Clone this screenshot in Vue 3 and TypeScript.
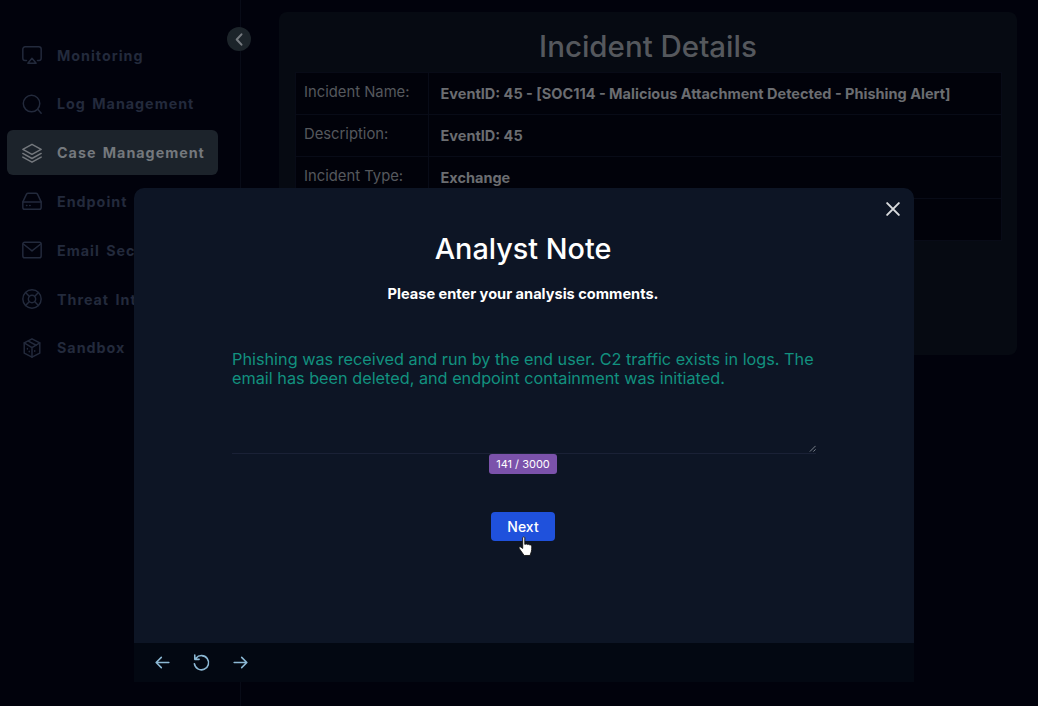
<template>
  <div class="page">
    <aside class="sidebar">
      <nav class="nav">
        <a v-for="item in navItems" :key="item.label" class="nav-item" :class="{ active: item.active }">
          <svg class="nav-icon" viewBox="0 0 24 24" fill="none" stroke="currentColor" stroke-width="1.6" stroke-linecap="round" stroke-linejoin="round">
            <path v-for="(d, i) in item.paths" :key="i" :d="d" />
          </svg>
          <span class="nav-label">{{ item.label }}</span>
        </a>
      </nav>
      <button class="collapse">
        <svg viewBox="0 0 24 24" fill="none" stroke="currentColor" stroke-width="2.6" stroke-linecap="round" stroke-linejoin="round">
          <path d="M14.5 5.5 8.5 12l6 6.5" />
        </svg>
      </button>
    </aside>

    <main class="main">
      <section class="panel">
        <h1 class="panel-title">Incident Details</h1>
        <table class="details">
          <tbody>
            <tr v-for="(row, i) in rows" :key="i">
              <td class="cell-label">{{ row.label }}</td>
              <td class="cell-value">{{ row.value }}</td>
            </tr>
          </tbody>
        </table>
      </section>
    </main>

    <div class="modal">
      <div class="modal-body">
        <button class="close">
          <svg viewBox="0 0 24 24" fill="none" stroke="currentColor" stroke-width="2.4" stroke-linecap="round">
            <path d="M5 5l14 14M19 5 5 19" />
          </svg>
        </button>
        <h2 class="modal-title">Analyst Note</h2>
        <p class="modal-sub">Please enter your analysis comments.</p>
        <div class="note">
          <p class="note-text">{{ note }}</p>
          <svg class="grip" viewBox="0 0 8 8" stroke="#8a929c" stroke-width="1">
            <path d="M1 7.5 7.5 1M5 7.5 7.5 5" />
          </svg>
        </div>
        <span class="counter">{{ note.length }} / 3000</span>
        <button class="next">
          Next
          <svg class="hand" viewBox="0 0 16 20">
            <path d="M5 1.6c0-1.1 1.900-1.100 1.900 0v6l.5-.1c.9-.4 1.700-.3 2 .3.8-.4 1.600-.2 1.900.4.9-.3 1.800.1 1.900 1 .1 2.100 0 4.300-.7 6.100l-.8 2.400H6.300L2 11.600c-.8-1-.2-2.100 1-1.700l2 1.400z" fill="#fff" stroke="#111" stroke-width=".8" stroke-linejoin="round" />
          </svg>
        </button>
      </div>
      <footer class="modal-foot">
        <svg class="foot-icon" viewBox="0 0 24 24" fill="none" stroke="currentColor" stroke-width="2" stroke-linecap="round" stroke-linejoin="round">
          <path d="M20 12H4.5M10.5 5.500 4 12l6.500 6.500" />
        </svg>
        <svg class="foot-icon" viewBox="0 0 24 24" fill="none" stroke="currentColor" stroke-width="2" stroke-linecap="round" stroke-linejoin="round">
          <path d="M5 6.5A9 9 0 1 1 3 13.5M3.5 2.500V8H9" />
        </svg>
        <svg class="foot-icon" viewBox="0 0 24 24" fill="none" stroke="currentColor" stroke-width="2" stroke-linecap="round" stroke-linejoin="round">
          <path d="M4 12h15.5M13.5 5.500 20 12l-6.500 6.500" />
        </svg>
      </footer>
    </div>
  </div>
</template>

<script setup lang="ts">
interface NavItem {
  label: string
  active?: boolean
  paths: string[]
}

const navItems: NavItem[] = [
  {
    label: 'Monitoring',
    paths: ['M6 18H4.5A2.5 2.5 0 0 1 2 15.5v-10A2.5 2.5 0 0 1 4.5 3h15A2.5 2.5 0 0 1 22 5.5v10a2.5 2.5 0 0 1-2.500 2.500H18', 'M12 15.5 16.5 21h-9z'],
  },
  {
    label: 'Log Management',
    paths: ['M11.5 20.5a9 9 0 1 0 0-18 9 9 0 0 0 0 18z', 'M18.5 18 22 22'],
  },
  {
    label: 'Case Management',
    active: true,
    paths: ['M12 2.5 22 8l-10 5.5L2 8z', 'M2 12.5 12 18l10-5.5', 'M2 16.5 12 22l10-5.5'],
  },
  {
    label: 'Endpoint Security',
    paths: ['M2 13 6 4.5a2 2 0 0 1 1.8-1h8.400a2 2 0 0 1 1.800 1L22 13', 'M2 13h20v6a2 2 0 0 1-2 2H4a2 2 0 0 1-2-2z', 'M6 17h.5M9.5 17h.5'],
  },
  {
    label: 'Email Security',
    paths: ['M4 3.5h16a2 2 0 0 1 2 2v13a2 2 0 0 1-2 2H4a2 2 0 0 1-2-2v-13a2 2 0 0 1 2-2z', 'M2.5 5.5 12 13l9.500-7.500'],
  },
  {
    label: 'Threat Intel',
    paths: ['M12 22a10 10 0 1 0 0-20 10 10 0 0 0 0 20z', 'M12 16a4 4 0 1 0 0-8 4 4 0 0 0 0 8z', 'M5 5l4.2 4.2M19 5l-4.2 4.2M5 19l4.2-4.2M19 19l-4.2-4.2'],
  },
  {
    label: 'Sandbox',
    paths: ['M12 2l8.5 4.500v11L12 22l-8.500-4.500v-11z', 'M3.5 6.5l8.500 5 8.500-5M12 11.500V22', 'M8 4.5 16.5 9M7 12.500v.5M9 15.500v.5M15 15v.5'],
  },
]

const rows = [
  { label: 'Incident Name:', value: 'EventID: 45 - [SOC114 - Malicious Attachment Detected - Phishing Alert]' },
  { label: 'Description:', value: 'EventID: 45' },
  { label: 'Incident Type:', value: 'Exchange' },
  { label: '', value: '' },
]

const note =
  'Phishing was received and run by the end user. C2 traffic exists in logs. The email has been deleted, and endpoint containment was initiated.'
</script>

<style>
html,
body {
  margin: 0;
  background: #01020c;
}
</style>

<style scoped>
.page {
  position: relative;
  display: flex;
  width: 1038px;
  height: 706px;
  overflow: hidden;
  background: #01020c;
  font-family: Inter, 'Open Sans', sans-serif;
}

.sidebar {
  position: relative;
  flex: none;
  box-sizing: border-box;
  width: 241px;
  padding: 32.5px 22px 0 7px;
  border-right: 1px solid #080b17;
}

.nav {
  display: flex;
  flex-direction: column;
  gap: 3.83px;
}

.nav-item {
  display: flex;
  align-items: center;
  gap: 14px;
  height: 45px;
  padding-left: 14px;
  border-radius: 6px;
  color: #232a3c;
}

.nav-item.active {
  background: #1c232b;
  color: #74787d;
}

.nav-icon {
  flex: none;
  width: 22px;
  height: 22px;
}

.nav-label {
  font-size: 14.3px;
  font-weight: 700;
  letter-spacing: 1px;
  word-spacing: 2px;
  white-space: nowrap;
}

.collapse {
  position: absolute;
  top: 27px;
  left: 227px;
  display: flex;
  align-items: center;
  justify-content: center;
  width: 24px;
  height: 24px;
  padding: 0;
  border: 0;
  border-radius: 50%;
  background: #1c242a;
  color: #767b80;
}

.collapse svg {
  width: 19px;
  height: 19px;
}

.main {
  flex: 1;
  padding: 12px 21px 0 38px;
}

.panel {
  box-sizing: border-box;
  height: 343px;
  padding: 0 15.5px;
  border-radius: 8px;
  background: #060a12;
}

.panel-title {
  margin: 0;
  height: 60px;
  color: #55585d;
  font-size: 29.5px;
  font-weight: 500;
  line-height: 69px;
  text-align: center;
}

.details {
  width: 100%;
  border-collapse: collapse;
  background: #01020a;
}

.details td {
  box-sizing: border-box;
  height: 42px;
  padding: 0;
  border: 1px solid #080b17;
}

.details .cell-label {
  width: 133px;
  padding: 0 0 4px 8.5px;
  color: #55585d;
  font-size: 14.8px;
}

.details .cell-value {
  padding: 0 0 1px 12px;
  color: #6b6d71;
  font-size: 14.5px;
  font-weight: 700;
}

.modal {
  position: absolute;
  top: 188px;
  left: 134px;
  display: flex;
  flex-direction: column;
  width: 780px;
  height: 494px;
  overflow: hidden;
  border-radius: 10px 10px 0 0;
  background: #0d1525;
}

.modal-body {
  position: relative;
  display: flex;
  flex: 1;
  flex-direction: column;
  align-items: center;
  padding-right: 2px;
}

.close {
  position: absolute;
  top: 11px;
  right: 11.5px;
  width: 20px;
  height: 20px;
  padding: 0;
  border: 0;
  background: none;
  color: #d8dadd;
}

.modal-title {
  margin: 43px 0 0;
  color: #fff;
  font-size: 28.8px;
  font-weight: 500;
  line-height: 36px;
}

.modal-sub {
  margin: 18px 0 0;
  color: #fff;
  font-size: 14.6px;
  font-weight: 700;
  line-height: 18px;
}

.note {
  position: relative;
  box-sizing: border-box;
  width: 584px;
  height: 104px;
  margin: 47px 0 0 2px;
  border-bottom: 1px solid #1a2136;
}

.note-text {
  margin: 0;
  color: #12917f;
  font-size: 16.25px;
  line-height: 18.5px;
}

.grip {
  position: absolute;
  right: 0;
  bottom: 1px;
  width: 7px;
  height: 7px;
}

.counter {
  padding: 0 7px;
  border-radius: 3px;
  background: #7b52ab;
  color: #fff;
  font-size: 11px;
  line-height: 20px;
}

.next {
  position: relative;
  width: 64px;
  height: 29px;
  margin-top: 38px;
  padding: 0 0 1px;
  border: 0;
  border-radius: 4px;
  background: #1f51dc;
  color: #fff;
  font-family: inherit;
  font-size: 14px;
  font-weight: 500;
}

.hand {
  position: absolute;
  top: 24px;
  left: 26px;
  width: 18px;
  height: 22px;
}

.modal-foot {
  display: flex;
  flex: none;
  align-items: center;
  gap: 20px;
  height: 39px;
  padding-left: 19px;
  background: #030812;
  color: #8cb8d4;
}

.foot-icon {
  width: 19px;
  height: 19px;
}
</style>
